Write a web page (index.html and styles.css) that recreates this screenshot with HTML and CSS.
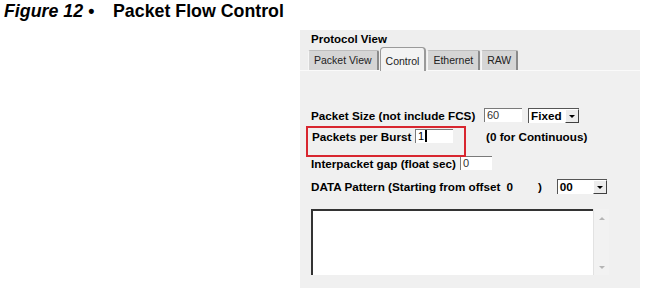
FILE: index.html
```html
<!DOCTYPE html>
<html lang="en">
<head>
  <meta charset="UTF-8" />
  <title>Packet Flow Control</title>
  <link rel="stylesheet" href="styles.css">
</head>
<body>
  <!-- caption -->
  <div class="caption">
    <span class="fig-num">Figure 12 •</span><span class="fig-title">Packet Flow Control</span>
  </div>

  <!-- protocol view panel -->
  <div class="panel">
    <div class="panel-title">Protocol View</div>
    <div class="tabs">
      <div class="tab">Packet View</div>
      <div class="tab active">Control</div>
      <div class="tab">Ethernet</div>
      <div class="tab">RAW</div>
    </div>

    <div class="tab-body">
      <div class="row row-size">
        <span class="label">Packet Size (not include FCS)</span>
        <div class="field w-size">60</div>
        <div class="combo w-fixed">
          <span class="combo-text">Fixed</span>
          <span class="combo-btn"></span>
        </div>
      </div>

      <div class="row row-burst">
        <span class="label">Packets per Burst</span>
        <div class="field w-burst">1<span class="caret"></span></div>
        <span class="label hint">(0 for Continuous)</span>
      </div>

      <div class="row row-gap">
        <span class="label">Interpacket gap (float sec)</span>
        <div class="field w-gap">0</div>
      </div>

      <div class="row row-data">
        <span class="label">DATA Pattern (Starting from offset</span>
        <span class="label offset">0</span>
        <span class="label paren">)</span>
        <div class="combo w-pattern">
          <span class="combo-text">00</span>
          <span class="combo-btn"></span>
        </div>
      </div>

      <div class="memo">
        <div class="memo-text"></div>
        <div class="memo-scroll">
          <span class="arrow up"></span>
          <span class="arrow down"></span>
        </div>
      </div>
    </div>

    <!-- red highlight box -->
    <div class="highlight"></div>
  </div>
</body>
</html>
```

FILE: styles.css
```css
body {
  margin: 0;
  background: #fff;
  color: #000;
  font-family: "Liberation Sans", Arial, sans-serif;
}

/* CAPTION */
.caption {
  margin-top: 1px;
  padding-left: 4px;
  height: 21px;
  line-height: 20px;
  font-size: 17.8px;
  font-weight: bold;
  white-space: nowrap;
}

.fig-num {
  font-style: italic;
  display: inline-block;
  width: 109px;
}

/* PANEL */
.panel {
  position: relative;
  margin: 8px 0 0 300px;
  width: 340px;
  height: 258px;
  background: #eeeeee;
  font-size: 11.7px;
}

.panel-title {
  padding: 3px 0 0 11px;
  height: 13px;
  line-height: 13px;
  font-weight: bold;
  font-size: 11.5px;
}

.tabs {
  display: flex;
  align-items: flex-end;
  height: 24px;
  padding-left: 8px;
  border-bottom: 1px solid #fafafa;
  font-size: 10.5px;
}

.tab {
  height: 19px;
  line-height: 18px;
  padding: 0 5px;
  margin-right: 1px;
  background: #d5d5d5;
  border: 1px solid #bdbdbd;
  border-left-color: #f6f6f6;
  border-right: 2px solid #8a8a8a;
  border-bottom: none;
  border-radius: 2px 2px 0 0;
  color: #222;
}

.tab.active {
  height: 23px;
  line-height: 26px;
  margin-bottom: -1px;
  background: #f3f3f3;
  border: 1px solid #9a9a9a;
  border-right: 2px solid #9a9a9a;
  border-bottom: none;
  border-radius: 4px 4px 0 0;
}

.tab-body {
  padding: 36px 0 0 11px;
  background: #f0f0f0;
  height: 181px;
}

/* ROWS */
.row {
  display: flex;
  align-items: center;
  height: 16px;
  font-weight: bold;
  white-space: nowrap;
}

.row-burst { margin-top: 5px; }
.row-gap { margin-top: 11px; }
.row-data { margin-top: 7px; }

.label { display: inline-block; }

.row-size .label { width: 173px; }
.row-burst .label { width: 103px; padding-left: 1px; }
.row-burst .hint { width: auto; margin-left: 32px; }
.row-gap .label { width: 149px; }
.row-data .label { width: auto; }
.row-data .offset { margin-left: 6px; }
.row-data .paren { margin-left: 25px; }

.field {
  height: 13px;
  line-height: 13px;
  padding-left: 2px;
  background: #fff;
  border-top: 1px solid #7a7a7a;
  border-left: 1px solid #7a7a7a;
  font-weight: normal;
  font-size: 11px;
  color: #333;
}

.w-size { width: 35px; }
.w-burst { width: 35px; color: #000; }
.w-gap { width: 29px; }

.caret {
  display: inline-block;
  width: 2px;
  height: 12px;
  margin-left: 1px;
  vertical-align: -2px;
  background: #000;
}

.combo {
  display: flex;
  height: 14px;
  background: #fff;
  border-top: 1px solid #555;
  border-left: 1px solid #555;
}

.w-fixed { width: 50px; margin-left: 6px; }
.w-pattern { width: 49px; margin-left: 15px; }

.combo-text {
  flex: 1;
  padding-left: 2px;
  line-height: 14px;
}

.combo-btn {
  position: relative;
  width: 12px;
  height: 12px;
  background: #ececec;
  border: 1px solid #fff;
  border-right-color: #404040;
  border-bottom-color: #404040;
}

.combo-btn::after {
  content: "";
  position: absolute;
  left: 3px;
  top: 5px;
  border-left: 3px solid transparent;
  border-right: 3px solid transparent;
  border-top: 3px solid #000;
}

/* MEMO */
.memo {
  display: flex;
  margin-top: 15px;
  height: 66px;
}

.memo-text {
  width: 280px;
  background: #fff;
  border-top: 2px solid #333;
  border-left: 2px solid #333;
}

.memo-scroll {
  display: flex;
  flex-direction: column;
  justify-content: space-between;
  align-items: center;
  width: 15px;
  padding: 8px 0 6px;
  background: #f2f2f2;
  border-left: 1px solid #e2e2e2;
}

.arrow {
  width: 0;
  height: 0;
  border-left: 3px solid transparent;
  border-right: 3px solid transparent;
}

.arrow.up { border-bottom: 3px solid #b5b5b5; }
.arrow.down { border-top: 3px solid #b5b5b5; }

/* ANNOTATION */
.highlight {
  position: absolute;
  left: 6px;
  top: 96px;
  width: 156px;
  height: 27px;
  border: 2px solid #d8262f;
}
```
